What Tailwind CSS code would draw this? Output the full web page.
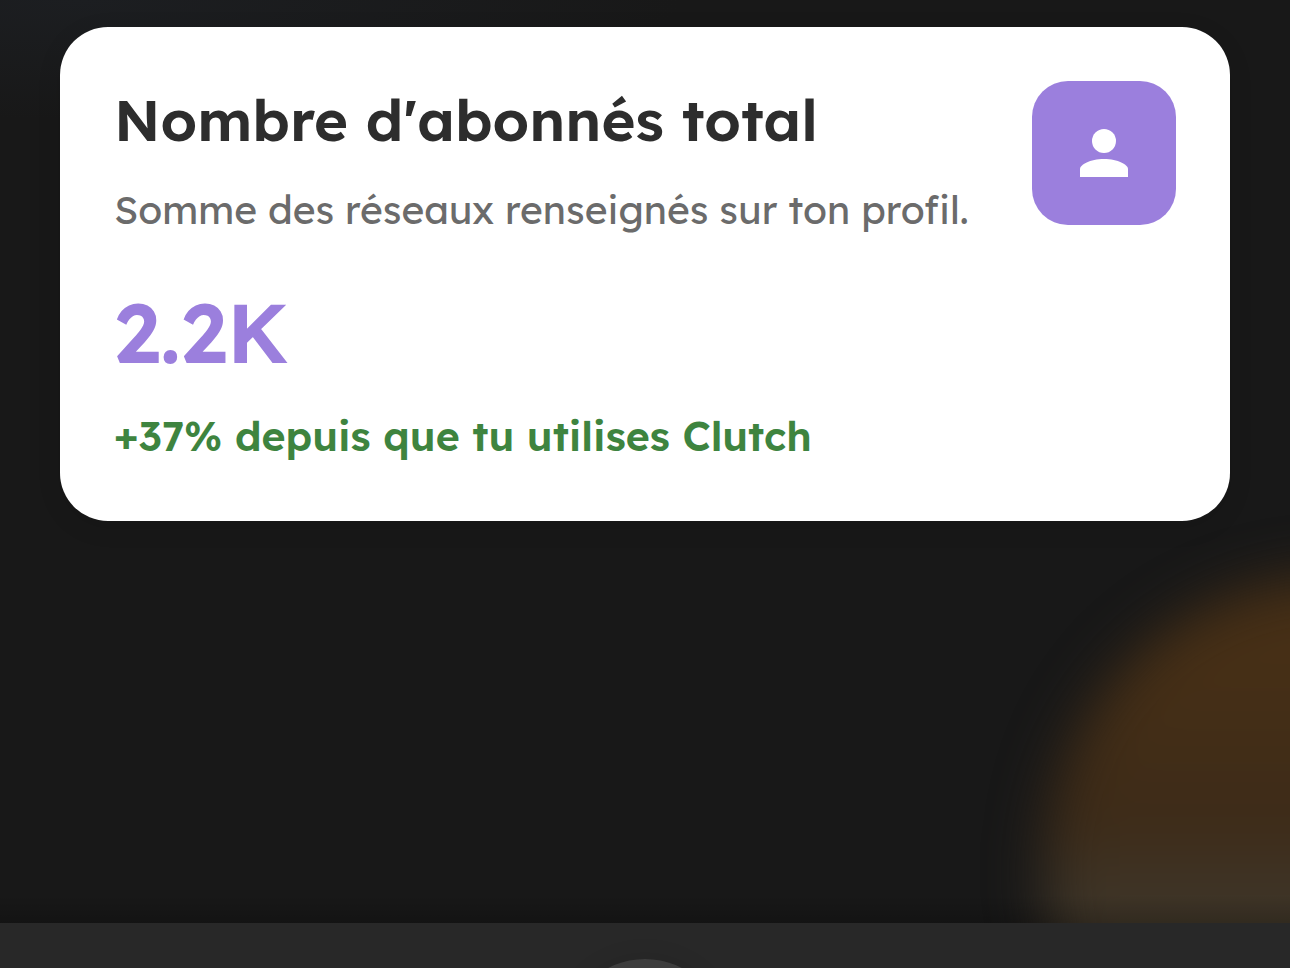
<!DOCTYPE html>
<html lang="fr">
<head>
<meta charset="utf-8">
<meta name="viewport" content="width=device-width, initial-scale=1">
<title>Clutch</title>
<script src="https://cdn.jsdelivr.net/npm/@tailwindcss/browser@4"></script>
</head>
<body class="flex h-screen flex-col overflow-hidden bg-[#181818] font-[Lexend,Inter,sans-serif]">
  <main class="relative min-h-0 flex-1 overflow-hidden bg-[radial-gradient(ellipse_600px_120px_at_80px_0px,#1c1e21,#181818)] px-[60px] pt-[27px]">
    <!-- Ambient glow -->
    <div class="absolute -right-[342px] top-[576px] size-[588px] rounded-full bg-linear-to-b from-[#462f16] from-15% via-[#3d2b18] via-42% to-[#3e3528] to-55% blur-[27px]"></div>
    <div class="absolute inset-x-0 bottom-0 h-7 bg-linear-to-b from-transparent to-black/20"></div>

    <section class="relative flex items-start justify-between rounded-[48px] bg-white px-[54px] pt-[54px] pb-[57px] shadow-[0_6px_24px_rgba(0,0,0,0.1)]">
      <div class="min-w-0">
        <h1 class="text-[58px] leading-[78px] font-semibold whitespace-nowrap text-[#2d2d2d]">Nombre d'abonnés total</h1>
        <p class="mt-6 text-[39px] leading-[54px] whitespace-nowrap text-[#6b6b6b]">Somme des réseaux renseignés sur ton profil.</p>
        <p class="mt-10 text-[84px] leading-[110px] font-semibold text-[#9b7fdd]">2.2K</p>
        <p class="mt-5 text-[41px] leading-[57px] font-semibold whitespace-nowrap text-[#3e843f]">+37% depuis que tu utilises Clutch</p>
      </div>
      <div class="flex size-36 shrink-0 items-center justify-center rounded-[36px] bg-[#9b7fdd]">
        <svg class="size-[72px] fill-white" viewBox="0 0 24 24" aria-hidden="true">
          <circle cx="12" cy="8" r="4"/>
          <path d="M4 20v-2.700C4 16 7.300 14 12 14s8 2 8 3.300V20z"/>
        </svg>
      </div>
    </section>
  </main>

  <nav class="flex h-[45px] shrink-0 items-start justify-center overflow-hidden bg-[#282828] pt-9" aria-label="Navigation principale">
    <button type="button" aria-label="Menu" class="size-40 shrink-0 rounded-full bg-[#3d3d3d] shadow-[0_0_24px_rgba(0,0,0,0.1)]"></button>
  </nav>
</body>
</html>
